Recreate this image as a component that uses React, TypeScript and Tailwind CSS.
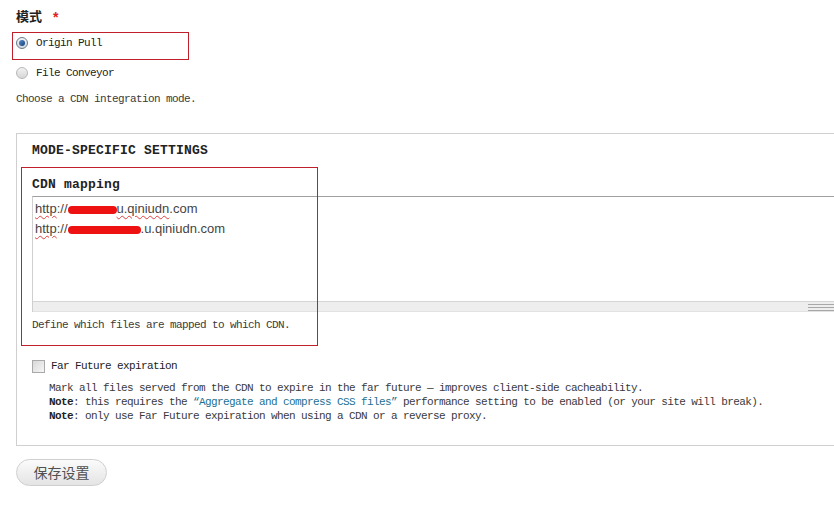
import React from "react";

const mono = "font-['Liberation_Mono','Noto_Sans_CJK_SC',monospace]";

function Radio({ checked }: { checked?: boolean }) {
  return (
    <span
      className={`relative inline-flex h-[12px] w-[12px] items-center justify-center rounded-full border ${
        checked ? "border-[#6a7a8c] bg-gradient-to-b from-[#f4f4f4] to-[#cfd6de]" : "border-[#b8b8b8] bg-gradient-to-b from-[#f2f2f2] to-[#d6d6d6]"
      }`}
    >
      {checked && (
        <span className="h-[6px] w-[6px] rounded-full bg-gradient-to-br from-[#5b8fd0] to-[#123f7a]" />
      )}
    </span>
  );
}

function Scribble({ w }: { w: number }) {
  return (
    <span className="relative inline-block h-[10px] align-middle" style={{ width: w }}>
      <span className="absolute left-0 right-0 top-[1px] h-[8px] rounded-full bg-[#ee1111]" />
    </span>
  );
}

export default function App() {
  return (
    <div className={`relative h-[510px] w-[834px] overflow-hidden bg-white pl-[16px] text-[#3a3a3a] ${mono}`}>
      {/* mode field */}
      <div className="mt-[6px] flex h-[20px] items-center leading-[20px]">
        <span className="font-['Noto_Sans_CJK_SC',sans-serif] text-[13px] font-bold text-[#222]">模式</span>
        <span className="ml-[11px] mt-[2px] font-['Liberation_Sans',sans-serif] text-[14px] font-bold text-[#e0201c]">*</span>
      </div>
      <div className="mt-[7px] flex h-[20px] items-center">
        <Radio checked />
        <span className="ml-[8px] text-[11px] tracking-[-0.6px] text-[#222]">Origin Pull</span>
      </div>
      <div className="mt-[10px] flex h-[20px] items-center">
        <Radio />
        <span className="ml-[8px] text-[11px] tracking-[-0.6px] text-[#222]">File Conveyor</span>
      </div>
      <div className="mt-[9px] h-[14px] text-[11px] leading-[14px] tracking-[-0.6px]">Choose a CDN integration mode.</div>

      {/* settings fieldset */}
      <div className="mt-[27px] w-[900px] border border-[#cfcfcf] pb-[22px] pl-[15px] pt-[9px]">
        <div className="h-[16px] text-[13px] font-bold leading-[16px] tracking-[0.2px] text-[#222]">MODE-SPECIFIC SETTINGS</div>
        <div className="mt-[18px] h-[16px] text-[13px] font-bold leading-[16px] tracking-[0.2px] text-[#222]">CDN mapping</div>

        <div className="mt-[3px] border-l border-t border-l-[#cfcfcf] border-t-[#a0a0a0]">
          <div className="h-[104px] pl-[2px] pt-[2px] font-['Liberation_Sans',sans-serif] text-[13px] leading-[20px] text-[#444]">
            <div className="whitespace-nowrap">
              <span className="underline decoration-[#e04040] decoration-wavy decoration-1 underline-offset-2">http</span>://
              <Scribble w={49} />
              <span className="underline decoration-[#e04040] decoration-wavy decoration-1 underline-offset-2">u.qiniudn</span>.com
            </div>
            <div className="whitespace-nowrap">
              <span className="underline decoration-[#e04040] decoration-wavy decoration-1 underline-offset-2">http</span>://
              <Scribble w={73} />
              .u.qiniudn.com
            </div>
          </div>
          <div className="relative h-[11px] border-b border-t border-b-[#e2e2e2] border-t-[#d4d4d4] bg-[#eeeeee]">
            <div className="absolute left-[775px] top-[2px] flex w-[40px] flex-col gap-[2px]">
              <span className="h-[1px] bg-[#a8a8a8]" />
              <span className="h-[1px] bg-[#a8a8a8]" />
              <span className="h-[1px] bg-[#a8a8a8]" />
            </div>
          </div>
        </div>

        <div className="mt-[6px] h-[14px] text-[11px] leading-[14px] tracking-[-0.6px]">Define which files are mapped to which CDN.</div>

        <div className="mt-[26px] flex h-[16px] items-center">
          <span className="h-[13px] w-[13px] border border-[#a9a9a9] bg-gradient-to-br from-[#d8d8d8] to-[#f6f6f6]" />
          <span className="ml-[6px] text-[11px] tracking-[-0.6px] text-[#222]">Far Future expiration</span>
        </div>
        <div className="mt-[7px] pl-[17px] text-[11px] leading-[14px] tracking-[-0.6px] whitespace-nowrap">
          <div>Mark all files served from the CDN to expire in the far future — improves client-side cacheability.</div>
          <div>
            <span className="font-bold text-[#222]">Note</span>: this requires the{" "}
            <span className="text-[#1d6f91]">“Aggregate and compress CSS files”</span> performance setting to be enabled (or your site will break).
          </div>
          <div>
            <span className="font-bold text-[#222]">Note</span>: only use Far Future expiration when using a CDN or a reverse proxy.
          </div>
        </div>
      </div>

      <button className="mt-[13px] flex h-[27px] w-[91px] items-center justify-center rounded-full border border-[#cfcfcf] bg-gradient-to-b from-[#fbfbfb] to-[#e4e4e4] font-['Noto_Sans_CJK_SC',sans-serif] text-[14px] text-[#505050]">
        保存设置
      </button>

      {/* highlight around the selected mode */}
      <div className="pointer-events-none absolute left-[12px] top-[32px] h-[28px] w-[177px] border border-[#c0202a]" />
      {/* highlight around the mapping field */}
      <div className="pointer-events-none absolute left-[21px] top-[167px] h-[179px] w-[297px] border border-[#c0202a]" />
    </div>
  );
}
